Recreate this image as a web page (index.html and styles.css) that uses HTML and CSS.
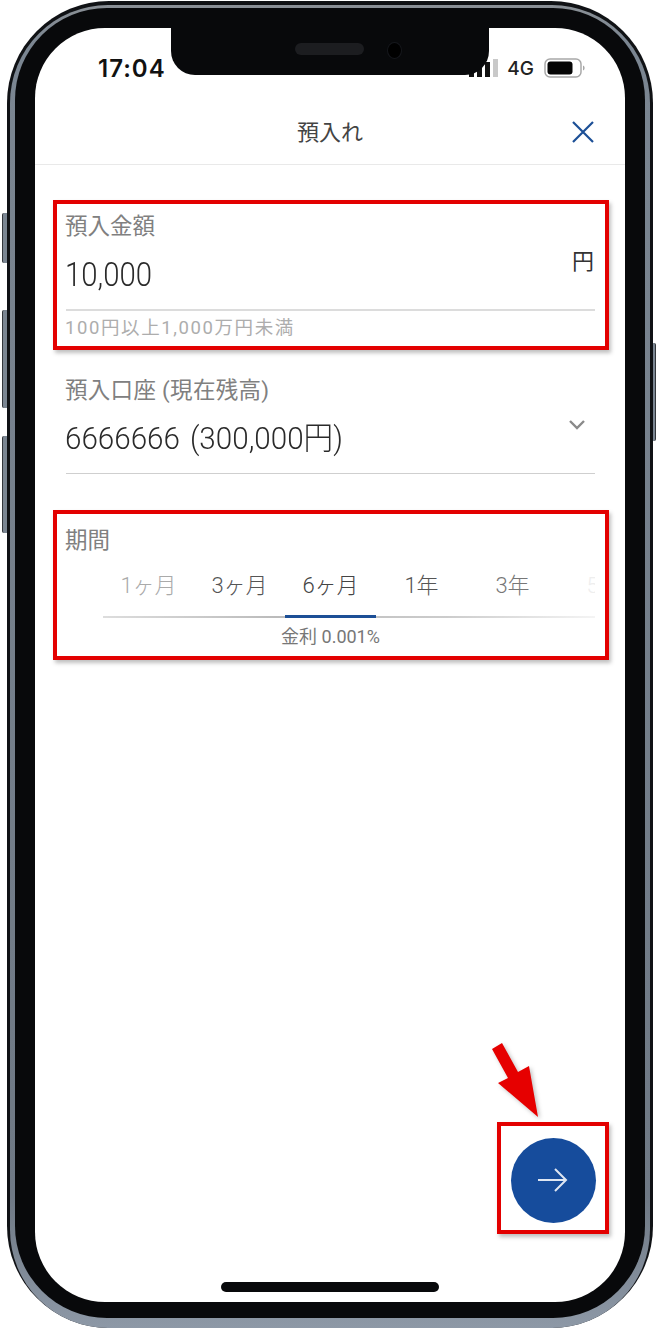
FILE: index.html
```html
<!DOCTYPE html>
<html lang="ja">
<head>
    <meta charset="UTF-8">
    <meta name="viewport" content="width=device-width, initial-scale=1.0">
    <title>預入れ</title>
    <link rel="stylesheet" href="styles.css">
</head>
<body>
    <div class="phone">
        <span class="side-btn side-mute"></span>
        <span class="side-btn side-vol-up"></span>
        <span class="side-btn side-vol-down"></span>
        <span class="side-btn side-power"></span>

        <div class="metal">
            <div class="bezel">
                <div class="screen">
                    <div class="notch">
                        <span class="speaker"></span>
                        <span class="camera"></span>
                    </div>

                    <div class="status-bar">
                        <span class="time">17:04</span>
                        <div class="status-right">
                            <svg class="signal" width="32" height="18" viewBox="0 0 32 18">
                                <rect x="2" y="10" width="5" height="8" fill="#111"/>
                                <rect x="10" y="6" width="5" height="12" fill="#111"/>
                                <rect x="18" y="3" width="5" height="15" fill="#111"/>
                                <rect x="26" y="0" width="5" height="18" fill="#c9c9c9"/>
                            </svg>
                            <span class="network">4G</span>
                            <svg class="battery" width="41" height="20" viewBox="0 0 41 20">
                                <rect x="1" y="1" width="36" height="18" rx="5" fill="#fff" stroke="#a8a8a8" stroke-width="1.5"/>
                                <rect x="3.5" y="3.5" width="25" height="13" rx="3" fill="#050505"/>
                                <path d="M39 7.5 C40.2 8 40.6 9 40.6 10 C40.6 11 40.2 12 39 12.5 Z" fill="#a8a8a8"/>
                            </svg>
                        </div>
                    </div>

                    <header class="nav-bar">
                        <h1 class="nav-title">預入れ</h1>
                        <svg class="close-icon" width="24" height="24" viewBox="0 0 24 24">
                            <path d="M2 2 L22 22 M22 2 L2 22" fill="none" stroke="#1c4f96" stroke-width="2.2"/>
                        </svg>
                    </header>

                    <main class="form">
                        <section class="mark-box amount">
                            <div class="field-label">預入金額</div>
                            <div class="amount-row">
                                <span class="big-value amount-value">10,000</span>
                                <span class="unit">円</span>
                            </div>
                            <div class="hint">100円以上1,000万円未満</div>
                        </section>

                        <section class="account">
                            <div class="field-label account-label">預入口座 (現在残高)</div>
                            <div class="account-row">
                                <span class="big-value account-value">6666666 (300,000円)</span>
                                <svg class="chevron" width="18" height="12" viewBox="0 0 18 12">
                                    <path d="M2 2 L9 9 L16 2" fill="none" stroke="#8a8a8a" stroke-width="2.4"/>
                                </svg>
                            </div>
                        </section>

                        <section class="mark-box term">
                            <div class="field-label">期間</div>
                            <div class="tabs">
                                <div class="tab tab-first">1ヶ月</div>
                                <div class="tab">3ヶ月</div>
                                <div class="tab active">6ヶ月</div>
                                <div class="tab">1年</div>
                                <div class="tab tab-fade">3年</div>
                                <div class="tab tab-last">5年</div>
                            </div>
                            <div class="rate">金利 0.001%</div>
                        </section>
                    </main>

                    <div class="mark-box fab-box">
                        <svg class="red-arrow" width="54" height="80" viewBox="0 0 54 80">
                            <polygon points="4,9 14,3 30,32 41,26 50,77 10,43 20,38" fill="#e60000"/>
                        </svg>
                        <button class="fab">
                            <svg width="32" height="26" viewBox="0 0 32 26">
                                <path d="M1 13 H29 M18 2 L29 13 L18 24" fill="none" stroke="#dfe6f2" stroke-width="2"/>
                            </svg>
                        </button>
                    </div>

                    <div class="home-bar"></div>
                </div>
            </div>
        </div>
    </div>
</body>
</html>
```

FILE: styles.css
```css
html, body {
    margin: 0;
    height: 1330px;
    overflow: hidden;
    background: #fff;
}
body {
    font-family: Roboto, "Noto Sans CJK JP", sans-serif;
    padding: 1px 0 0 7px;
    box-sizing: border-box;
}

/* phone frame: dark rim, metal band, black bezel */
.phone {
    position: relative;
    width: 646px;
    height: 1327px;
    box-sizing: border-box;
    padding: 4px 3px 0 3px;
    border-radius: 102px;
    background: #101215;
}
.metal {
    height: 100%;
    box-sizing: border-box;
    padding: 3px 5px 10px 5px;
    border-radius: 98px;
    background: linear-gradient(to bottom, #8a9096 0, #7b8692 3%, #6f7985 90%, #8d98a6 100%);
}
.bezel {
    height: 100%;
    box-sizing: border-box;
    padding: 20px 20px 16px 20px;
    border-radius: 92px;
    background: #08090b;
}
.side-btn {
    position: absolute;
    width: 4px;
    background: #7b8692;
    border-left: 1px solid #33373c;
    border-radius: 2px 0 0 2px;
}
.side-mute { left: -5px; top: 212px; height: 50px; }
.side-vol-up { left: -5px; top: 309px; height: 98px; }
.side-vol-down { left: -5px; top: 435px; height: 97px; }
.side-power {
    right: -3px;
    top: 342px;
    width: 2px;
    height: 98px;
    border-left: none;
    border-right: 1px solid #33373c;
    border-radius: 0 2px 2px 0;
}

.screen {
    position: relative;
    display: flex;
    flex-direction: column;
    height: 100%;
    border-radius: 70px;
    overflow: hidden;
    background: #fff;
}
.notch {
    position: absolute;
    left: 136px;
    top: 0;
    width: 318px;
    height: 47px;
    background: #08090b;
    border-radius: 0 0 24px 24px;
}
.speaker {
    position: absolute;
    left: 124px;
    top: 15px;
    width: 69px;
    height: 12px;
    border-radius: 6px;
    background: #1c1d20;
}
.camera {
    position: absolute;
    left: 217px;
    top: 15px;
    width: 13px;
    height: 15px;
    border-radius: 50%;
    background: #000;
    box-shadow: 0 0 0 1px #15171c;
}

/* status bar */
.status-bar {
    display: flex;
    justify-content: space-between;
    align-items: center;
    height: 64px;
    padding: 8px 40px 0 63px;
    flex-shrink: 0;
}
.time {
    font-family: Inter, sans-serif;
    font-size: 24px;
    font-weight: 600;
    letter-spacing: 1px;
    color: #111;
}
.status-right {
    display: flex;
    align-items: center;
}
.signal { margin-right: 8px; }
.network {
    font-family: Inter, sans-serif;
    font-size: 19px;
    font-weight: 500;
    color: #222;
    margin-right: 10px;
}

/* nav */
.nav-bar {
    position: relative;
    display: flex;
    justify-content: center;
    align-items: center;
    box-sizing: border-box;
    height: 65px;
    padding-bottom: 4px;
    border-bottom: 1px solid #e9e9e9;
    flex-shrink: 0;
}
.nav-title {
    margin: 0;
    font-size: 22px;
    font-weight: 400;
    color: #444;
}
.close-icon {
    position: absolute;
    right: 30px;
    top: 20px;
}

/* form */
.form {
    padding: 35px 16px 0 18px;
}
.mark-box {
    box-sizing: border-box;
    border: 4px solid #e30000;
    box-shadow: 2px 3px 4px rgba(0, 0, 0, 0.25);
}
.field-label {
    margin-left: -1px;
    font-size: 22.5px;
    line-height: 28px;
    color: #808080;
}
.big-value {
    display: inline-block;
    margin-left: -1px;
    font-weight: 300;
    color: #2a2a2a;
    transform-origin: left center;
}
.amount {
    height: 150px;
    padding: 8px 10px 0 9px;
}
.amount-row {
    display: flex;
    justify-content: space-between;
    height: 69px;
    border-bottom: 2px solid #dcdcdc;
}
.amount-value {
    font-size: 33px;
    line-height: 70px;
    transform: scaleX(0.89);
}
.unit {
    font-size: 22px;
    line-height: 44px;
    color: #333;
    margin-right: 1px;
}
.hint {
    margin-left: -1px;
    font-size: 18.5px;
    letter-spacing: 1.6px;
    line-height: 35px;
    color: #adadad;
    white-space: nowrap;
}

.account {
    padding: 26px 14px 0 13px;
    margin-bottom: 36px;
}
.account-label {
    letter-spacing: 0.3px;
}
.account-row {
    display: flex;
    justify-content: space-between;
    height: 70px;
    padding-top: 12px;
    box-sizing: border-box;
    border-bottom: 1px solid #cfcfcf;
}
.account-value {
    font-size: 32px;
    line-height: 44px;
    word-spacing: 3px;
    transform: scaleX(0.925);
    white-space: nowrap;
}
.chevron {
    margin: 3px 9px 0 0;
}

.term {
    height: 150px;
    padding: 12px 10px 0 9px;
}
.tabs {
    display: flex;
    margin-left: 37px;
    overflow: hidden;
    height: 64px;
    background: linear-gradient(to right, #ddd 0, #bbb 35%, #ccc 70%, #f4f4f4 100%) left bottom / 100% 2px no-repeat;
}
.tab {
    flex: 0 0 91px;
    box-sizing: border-box;
    padding-top: 16px;
    text-align: center;
    font-size: 22px;
    font-weight: 300;
    line-height: 32px;
    color: #555;
}
.tab.active {
    color: #444;
    border-bottom: 3px solid #1c4f96;
}
.tab-first { color: #aaa; }
.tab-fade { color: #777; }
.tab-last { color: #eee; }
.rate {
    text-align: center;
    font-size: 18px;
    line-height: 38px;
    color: #777;
}

/* next button */
.fab-box {
    position: relative;
    align-self: flex-end;
    display: flex;
    justify-content: center;
    align-items: center;
    width: 112px;
    height: 112px;
    margin: auto 16px 0 0;
    flex-shrink: 0;
}
.red-arrow {
    position: absolute;
    left: -13px;
    top: -86px;
    filter: drop-shadow(2px 2px 2px rgba(0, 0, 0, 0.25));
}
.fab {
    display: flex;
    justify-content: center;
    align-items: center;
    width: 85px;
    height: 85px;
    margin-top: 4px;
    padding: 0;
    border: none;
    border-radius: 50%;
    background: #164c9c;
}
.home-bar {
    align-self: center;
    width: 218px;
    height: 10px;
    margin: 48px 0 10px 0;
    border-radius: 5px;
    background: #08090b;
    flex-shrink: 0;
}
```
